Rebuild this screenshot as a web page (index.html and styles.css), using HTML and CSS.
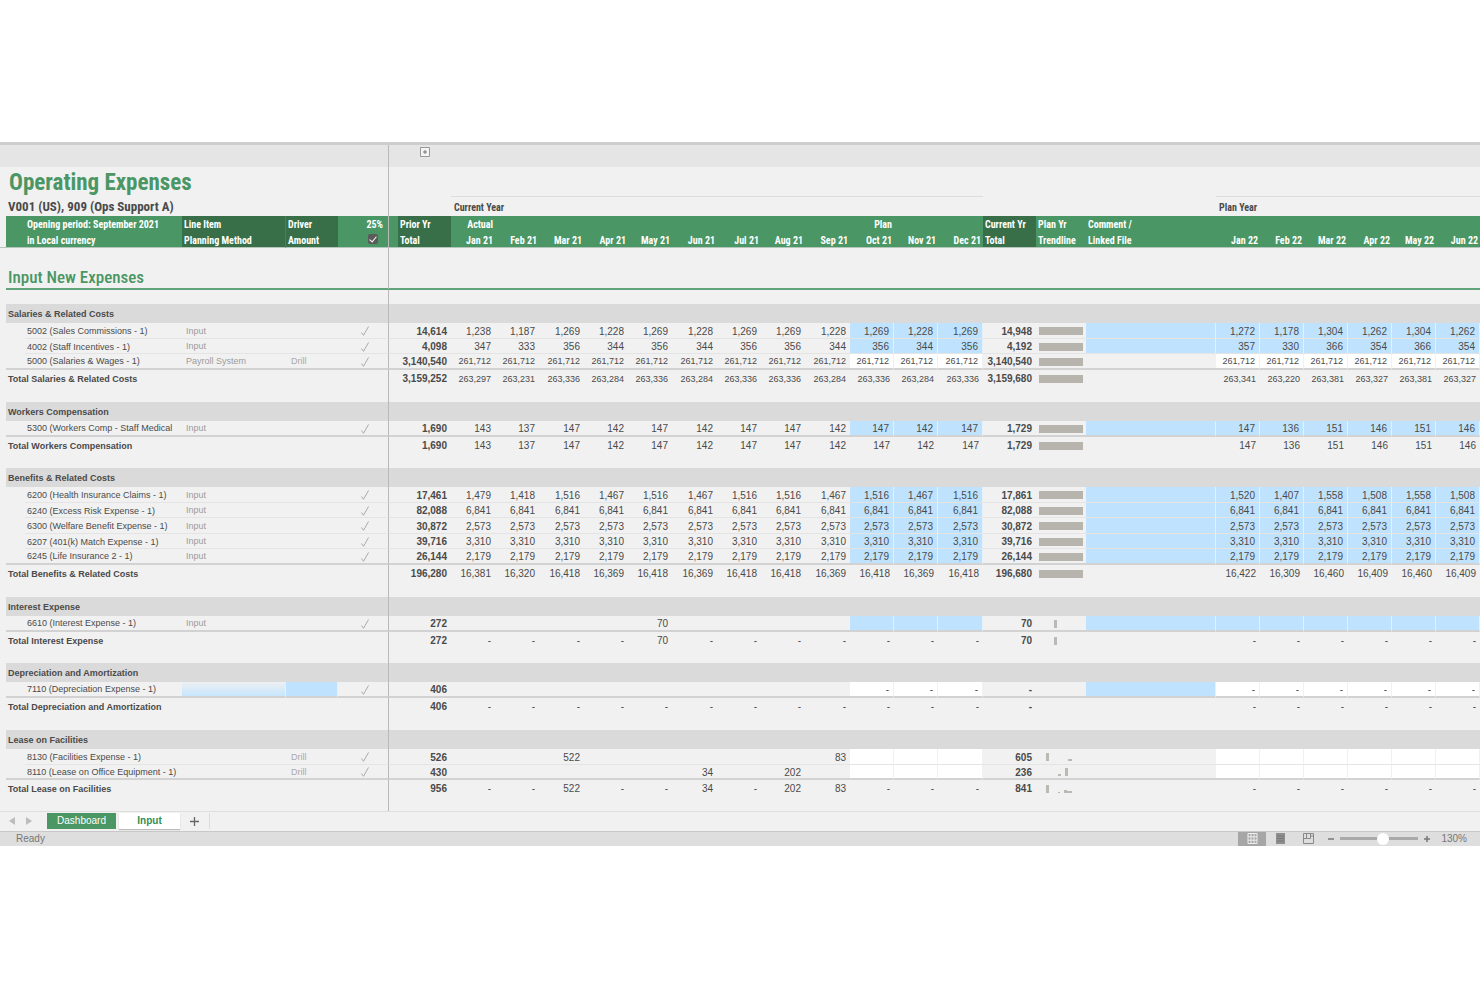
FILE: index.html
```html
<!DOCTYPE html>
<html lang="en">
<head>
<meta charset="utf-8">
<title>Operating Expenses</title>
<link rel="stylesheet" href="styles.css">
</head>
<body>
<main class="workbook">
  <table class="sheet">
    <colgroup>
      <col class="c-edge"><col class="c-label"><col class="c-method"><col class="c-driver"><col class="c-check"><col class="c-gap"><col class="c-total">
      <col class="c-month"><col class="c-month"><col class="c-quarter"><col class="c-month"><col class="c-month"><col class="c-quarter"><col class="c-month"><col class="c-month"><col class="c-quarter"><col class="c-month"><col class="c-month"><col class="c-quarter">
      <col class="c-total"><col class="c-trend"><col class="c-comment">
      <col class="c-month"><col class="c-month"><col class="c-month"><col class="c-month"><col class="c-month"><col class="c-month">
    </colgroup>
    <thead>
      <tr class="outline">
        <td colspan="4"></td><td class="freeze"></td><td></td>
        <td class="center"><button class="expand" type="button" aria-label="Expand columns"><svg viewBox="0 0 10 10"><path d="M.5.5h9v9h-9z" fill="#f4f4f4" stroke="#999"/><path d="M3 5h4M5 3v4" stroke="#777"/></svg></button></td>
        <td colspan="21"></td>
      </tr>
      <tr class="title-row">
        <td></td><td colspan="3"><h1>Operating Expenses</h1></td><td class="freeze"></td><td colspan="23"></td>
      </tr>
      <tr class="subtitle-row">
        <td></td><td colspan="3" class="entity">V001 (US), 909 (Ops Support A)</td><td class="freeze"></td><td colspan="2"></td>
        <th class="year" colspan="12">Current Year</th><td colspan="3"></td><th class="year" colspan="6">Plan Year</th>
      </tr>
      <tr class="head">
        <td class="edge"></td><th class="indent">Opening period: September 2021</th><th class="dark split">Line Item</th><th class="dark">Driver</th><th class="num freeze pct">25%</th><td></td><th class="dark">Prior Yr</th>
        <th class="num">Actual</th><td colspan="8"></td><th class="num">Plan</th><td colspan="2"></td>
        <th class="dark">Current Yr</th><th>Plan Yr</th><th>Comment /</th><td colspan="6"></td>
      </tr>
      <tr class="head last">
        <td class="edge"></td><th class="indent">in Local currency</th><th class="dark split">Planning Method</th><th class="dark">Amount</th><th class="num freeze pct"><input class="tick-box" type="checkbox" checked aria-label="Apply 25%"></th><td></td><th class="dark">Total</th>
        <th class="num">Jan 21</th><th class="num">Feb 21</th><th class="num">Mar 21</th><th class="num">Apr 21</th><th class="num">May 21</th><th class="num">Jun 21</th><th class="num">Jul 21</th><th class="num">Aug 21</th><th class="num">Sep 21</th><th class="num">Oct 21</th><th class="num">Nov 21</th><th class="num">Dec 21</th>
        <th class="dark">Total</th><th>Trendline</th><th>Linked File</th>
        <th class="num">Jan 22</th><th class="num">Feb 22</th><th class="num">Mar 22</th><th class="num">Apr 22</th><th class="num">May 22</th><th class="num">Jun 22</th>
      </tr>
      <tr class="section-title">
        <td class="edge"></td><td class="line" colspan="3"><h2>Input New Expenses</h2></td><td class="line freeze"></td><td class="line" colspan="23"></td>
      </tr>
      <tr class="section-gap"><td colspan="4"></td><td class="freeze"></td><td colspan="23"></td></tr>
    </thead>
  </table>
  <nav class="tabs" aria-label="Sheets">
    <button class="step" type="button" aria-label="Previous sheet"><svg viewBox="0 0 6 8"><path d="M6 0v8L0 4z" fill="#bdbdbd"/></svg></button>
    <button class="step" type="button" aria-label="Next sheet"><svg viewBox="0 0 6 8"><path d="M0 0v8l6-4z" fill="#bdbdbd"/></svg></button>
    <a class="tab green" href="#dashboard">Dashboard</a>
    <a class="tab current" href="#input" aria-current="page">Input</a>
    <button class="add" type="button" aria-label="Add sheet"><svg viewBox="0 0 9 9"><path d="M0 4.500h9M4.500 0v9" stroke="#666" stroke-width="1.300"/></svg></button>
  </nav>
  <footer class="status">
    <span class="ready">Ready</span>
    <button class="view on" type="button" aria-label="Normal view"><svg viewBox="0 0 11 11"><path d="M1 .5h9v10H1zM1 3.800h9M1 7.200h9M4 .5v10M7 .5v10" fill="none" stroke="#eee"/></svg></button>
    <button class="view" type="button" aria-label="Page layout"><svg viewBox="0 0 11 11"><path d="M1 0h9v11H1z" fill="#8f8f8f"/><path d="M2 3h7M2 5.500h7M2 8h7" stroke="#777"/></svg></button>
    <button class="view" type="button" aria-label="Page break preview"><svg viewBox="0 0 11 11"><path d="M.5.5h10v10H.5zM3.500.5v5H.5M7.500.5v5h-4M7.500 3h3" fill="none" stroke="#888"/></svg></button>
    <button class="zoom-step" type="button" aria-label="Zoom out"><svg viewBox="0 0 6 6"><path d="M0 3h6" stroke="#777" stroke-width="1.500"/></svg></button>
    <input class="zoom" type="range" min="0" max="100" value="55" aria-label="Zoom">
    <button class="zoom-step" type="button" aria-label="Zoom in"><svg viewBox="0 0 6 6"><path d="M0 3h6M3 0v6" stroke="#777" stroke-width="1.500"/></svg></button>
    <span class="percent">130%</span>
  </footer>
</main>
<script src="sheet.js"></script>
</body>
</html>
```

FILE: styles.css
```css
* { box-sizing: border-box; }

body {
  margin: 0;
  min-height: 100vh;
  display: flex;
  flex-direction: column;
  justify-content: center;
  background: #fff;
  color: #4a4a4a;
  font: 10px/14px "Liberation Sans", Arial, sans-serif;
}

button {
  display: inline-flex;
  align-items: center;
  justify-content: center;
  padding: 0;
  border: 0;
  background: none;
}

.workbook {
  overflow: hidden;
  background: #f1f1f1;
  border-top: 3px solid #cdcdcd;
}

/* Grid */
.sheet {
  width: 100%;
  table-layout: fixed;
  border-collapse: separate;
  border-spacing: 0;
}
.c-edge { width: 6px; }
.c-label { width: 176px; }
.c-method { width: 104px; }
.c-driver { width: 52px; }
.c-check { width: 51px; }
.c-gap { width: 9px; }
.c-total { width: 53px; }
.c-month { width: 44px; }
.c-quarter { width: 45px; }
.c-trend { width: 50px; }
.c-comment { width: 130px; }

.sheet td,
.sheet th {
  padding: 0;
  white-space: nowrap;
  text-align: left;
  font-weight: normal;
}
.sheet .freeze { border-right: 1px solid #b9b9b9; }
.sheet .center { text-align: center; }

.outline td { height: 22px; background: #e5e5e5; }
.expand { width: 10px; height: 10px; vertical-align: top; margin-top: -2px; }
.expand svg { width: 10px; height: 10px; }

.title-row td { height: 29px; }
.title-row h1,
.section-title h2,
.entity,
.head,
.year {
  font-family: "Liberation Sans Narrow", "Arial Narrow", "Roboto Condensed", Roboto, sans-serif;
}
.title-row h1 {
  margin: 0;
  padding: 3px 0 0 3px;
  font-size: 23px;
  line-height: 26px;
  font-weight: bold;
  color: #4a9664;
}
.subtitle-row td,
.subtitle-row th { height: 20px; }
.sheet .entity { padding: 2px 0 0 2px; font-size: 13px; line-height: 18px; font-weight: bold; }
.sheet .year { padding: 3px 0 0 3px; border-top: 1px solid #dcdcdc; font-weight: bold; }

.head td,
.head th { height: 16px; background: #4a9664; color: #fff; }
.head.last td,
.head.last th { border-bottom: 1px solid #b5c6ba; }
.sheet .head th { padding: 2px 0 0 2px; font-weight: bold; line-height: 12px; }
.sheet .head.last th { padding-top: 3px; }
.sheet .head .edge { background: none; }
.sheet .head .indent { padding-left: 21px; }
.sheet .head .dark { background: #386f48; }
.sheet .head .split { border-right: 1px solid #4a8058; }
.sheet .head .num { padding-left: 0; padding-right: 2px; text-align: right; }
.sheet .head .pct { padding-right: 5px; }
.sheet .head.last .pct { padding-top: 0; }

.tick-box {
  appearance: none;
  display: inline-block;
  width: 10px;
  height: 10px;
  margin: 0 5px 0 0;
  vertical-align: middle;
  border-radius: 2px;
  background: #5b5b5b;
}
.tick-box:checked::before {
  content: "";
  display: block;
  width: 3px;
  height: 6px;
  margin: 1px 0 0 3px;
  border: solid #fff;
  border-width: 0 1px 1px 0;
  transform: rotate(40deg);
}

.section-title td { height: 42px; vertical-align: bottom; }
.section-title .line { border-bottom: 2px solid #62a479; }
.section-title h2 {
  margin: 0;
  padding-left: 2px;
  font-size: 17px;
  line-height: 22px;
  font-weight: 500;
  color: #4a9664;
}
.section-gap td { height: 14px; }

/* Account groups */
.sheet .group th { font-size: 9px; }
.band td,
.band th { height: 19px; background: #dadada; }
.sheet .band th { padding: 2px 0 0 2px; font-weight: bold; }
.sheet .band .edge { background: none; }

.item { height: 15px; }
.item:nth-child(even) { height: 16px; }
.sheet .item td,
.sheet .item th { padding-top: 2px; border-bottom: 1px solid #e4e4e4; line-height: 11px; }
.sheet .item .edge { border-bottom: 0; }
.sheet .item th {
  padding-left: 21px;
  border-bottom: 0;
  background: linear-gradient(#e4e4e4, #e4e4e4) no-repeat 19px 100% / 100% 1px;
}
.sheet .item.end td,
.sheet .item.end th { border-bottom: 2px solid #d2d2d2; background-image: none; }
.sheet .item.end .edge { border-bottom: 0; }
.total { height: 15px; }
.sheet .total td,
.sheet .total th { padding-top: 3px; line-height: 12px; }
.sheet .total th { padding-left: 2px; font-weight: bold; }
.gap td { height: 17px; }
.group:nth-child(even) .gap td { height: 16px; }

.sheet .method { padding-left: 4px; color: #9c9c9c; font-size: 9px; }
.sheet .driver { padding-left: 5px; color: #aaa; font-size: 9px; }
.sheet .mark { padding-left: 23px; }
.mark svg { display: block; width: 8px; height: 10px; }
.sheet td.num { padding-right: 4px; text-align: right; }
.sheet td.fit { font-size: 9px; }
.sheet td.sum { font-weight: bold; }
.sheet td.trend { padding-left: 3px; }
.trend svg { display: block; width: 44px; height: 8px; }

.sheet .blue { background: #bfe3ff; border-right: 1px solid #e6f0f8; }
.sheet .white { background: #fff; border-right: 1px solid #f1f1f1; }
.sheet .item.end .fade { background: linear-gradient(#edf0f3, #c6e5fd); border-right: 1px solid #e6f0f8; }

/* Sheet tabs */
.tabs {
  display: flex;
  align-items: center;
  height: 20px;
  padding-left: 8px;
  border-top: 1px solid #dedede;
}
.step { width: 8px; height: 12px; margin-right: 9px; }
.step svg { width: 6px; height: 8px; }
.tab { display: block; text-align: center; text-decoration: none; line-height: 16px; }
.green { width: 69px; margin-left: 5px; background: #4a9664; color: #fff; }
.current {
  width: 61px;
  margin: 0 0 1px 3px;
  background: #fff;
  color: #2f9056;
  font-weight: bold;
  box-shadow: 0 1px 1px #bbb;
}
.add { width: 30px; height: 16px; border-right: 1px solid #dcdcdc; }
.add svg { width: 9px; height: 9px; }

/* Status bar */
.status {
  display: flex;
  align-items: center;
  height: 15px;
  padding: 0 13px 0 16px;
  border-top: 1px solid #c8c8c8;
  background: #dedede;
  color: #777;
}
.ready { flex: 1; }
.view { width: 28px; height: 14px; }
.on { background: #a6a6a6; }
.view svg { width: 11px; height: 11px; }
.zoom-step { width: 6px; height: 12px; }
.zoom-step svg { width: 6px; height: 6px; }
.view + .zoom-step { margin-left: 6px; }
.zoom {
  appearance: none;
  width: 78px;
  height: 12px;
  margin: 0 6px;
  background: linear-gradient(#aaa, #aaa) no-repeat center / 100% 3px;
}
.zoom::-webkit-slider-thumb {
  appearance: none;
  width: 12px;
  height: 12px;
  border-radius: 50%;
  background: #fff;
}
.percent { margin-left: 11px; }
```

FILE: sheet.js
```js
// Month lists are space separated; "." is an empty cell, "a*12" repeats a value.
const groups = [
  { name: "Salaries & Related Costs", rows: [
    { label: "5002 (Sales Commissions - 1)", method: "Input", prior: "14,614", year: "1,238 1,187 1,269 1,228 1,269 1,228 1,269 1,269 1,228 1,269 1,228 1,269", current: "14,948", plan: "1,272 1,178 1,304 1,262 1,304 1,262", trend: "full", fill: "blue", comment: true },
    { label: "4002 (Staff Incentives - 1)", method: "Input", prior: "4,098", year: "347 333 356 344 356 344 356 356 344 356 344 356", current: "4,192", plan: "357 330 366 354 366 354", trend: "full", fill: "blue", comment: true },
    { label: "5000 (Salaries & Wages - 1)", method: "Payroll System", driver: "Drill", prior: "3,140,540", year: "261,712*12", current: "3,140,540", plan: "261,712*6", trend: "full", fill: "white" },
    { total: true, prior: "3,159,252", year: "263,297 263,231 263,336 263,284 263,336 263,284 263,336 263,336 263,284 263,336 263,284 263,336", current: "3,159,680", plan: "263,341 263,220 263,381 263,327 263,381 263,327", trend: "full" }
  ] },
  { name: "Workers Compensation", rows: [
    { label: "5300 (Workers Comp - Staff Medical", method: "Input", prior: "1,690", year: "143 137 147 142 147 142 147 147 142 147 142 147", current: "1,729", plan: "147 136 151 146 151 146", trend: "full", fill: "blue", comment: true },
    { total: true, prior: "1,690", year: "143 137 147 142 147 142 147 147 142 147 142 147", current: "1,729", plan: "147 136 151 146 151 146", trend: "full" }
  ] },
  { name: "Benefits & Related Costs", rows: [
    { label: "6200 (Health Insurance Claims - 1)", method: "Input", prior: "17,461", year: "1,479 1,418 1,516 1,467 1,516 1,467 1,516 1,516 1,467 1,516 1,467 1,516", current: "17,861", plan: "1,520 1,407 1,558 1,508 1,558 1,508", trend: "full", fill: "blue", comment: true },
    { label: "6240 (Excess Risk Expense - 1)", method: "Input", prior: "82,088", year: "6,841*12", current: "82,088", plan: "6,841*6", trend: "full", fill: "blue", comment: true },
    { label: "6300 (Welfare Benefit Expense - 1)", method: "Input", prior: "30,872", year: "2,573*12", current: "30,872", plan: "2,573*6", trend: "full", fill: "blue", comment: true },
    { label: "6207 (401(k) Match Expense - 1)", method: "Input", prior: "39,716", year: "3,310*12", current: "39,716", plan: "3,310*6", trend: "full", fill: "blue", comment: true },
    { label: "6245 (Life Insurance 2 - 1)", method: "Input", prior: "26,144", year: "2,179*12", current: "26,144", plan: "2,179*6", trend: "full", fill: "blue", comment: true },
    { total: true, prior: "196,280", year: "16,381 16,320 16,418 16,369 16,418 16,369 16,418 16,418 16,369 16,418 16,369 16,418", current: "196,680", plan: "16,422 16,309 16,460 16,409 16,460 16,409", trend: "full" }
  ] },
  { name: "Interest Expense", rows: [
    { label: "6610 (Interest Expense - 1)", method: "Input", prior: "272", year: ". . . . 70 . . . . . . .", current: "70", plan: ".*6", trend: "may", fill: "blue", comment: true },
    { total: true, prior: "272", year: "- - - - 70 - - - - - - -", current: "70", plan: "-*6", trend: "may" }
  ] },
  { name: "Depreciation and Amortization", rows: [
    { label: "7110 (Depreciation Expense - 1)", entry: true, prior: "406", year: ". . . . . . . . . - - -", current: "-", plan: "-*6", fill: "white", comment: true },
    { total: true, prior: "406", year: "-*12", current: "-", plan: "-*6" }
  ] },
  { name: "Lease on Facilities", rows: [
    { label: "8130 (Facilities Expense - 1)", driver: "Drill", prior: "526", year: ". . 522 . . . . . 83 . . .", current: "605", plan: ".*6", trend: "marSep", fill: "white" },
    { label: "8110 (Lease on Office Equipment - 1)", driver: "Drill", prior: "430", year: ". . . . . 34 . 202 . . . .", current: "236", plan: ".*6", trend: "junAug", fill: "white" },
    { total: true, prior: "956", year: "- - 522 - - 34 - 202 83 - - -", current: "841", plan: "-*6", trend: "all" }
  ] }
];

// Sparkline bars as x, width, height.
const trends = {
  full: [[0, 44, 8]],
  may: [[15, 3, 8]],
  marSep: [[7, 3, 8], [29, 4, 2]],
  junAug: [[19, 3, 2], [26, 3, 8]],
  all: [[7, 3, 8], [19, 2, 1], [25, 3, 3], [28, 5, 2]]
};

const esc = s => s.replace(/&/g, "&amp;");
const values = s => s.includes("*") ? Array(Number(s.split("*")[1])).fill(s.split("*")[0]) : s.split(" ");
const number = (v, cls) => `<td class="num${v.length > 6 && !cls.includes("sum") ? " fit" : ""} ${cls}">${v === "." ? "" : v}</td>`;
const check = '<svg viewBox="0 0 8 10"><path d="M.5 6.500 2.500 9.300 7.500.5" fill="none" stroke="#aaa"/></svg>';

function trend(kind) {
  if (!kind) return "";
  const color = kind === "full" ? "#b6b4ad" : "#bbb9b3";
  return `<svg viewBox="0 0 44 8">${trends[kind].map(([x, w, h]) => `<rect x="${x}" y="${8 - h}" width="${w}" height="${h}" fill="${color}"/>`).join("")}</svg>`;
}

function row(r, i, rows, name) {
  const fill = r.fill || "";
  const cls = r.total ? "total" : "item" + (rows[i + 1].total ? " end" : "");
  const label = r.total ? "Total " + name : r.label;
  return `<tr class="${cls}"><td class="edge"></td><th>${esc(label)}</th>` +
    `<td class="method${r.entry ? " fade" : ""}">${r.method || ""}</td>` +
    `<td class="driver${r.entry ? " blue" : ""}">${r.driver || ""}</td>` +
    `<td class="mark freeze">${r.total ? "" : check}</td><td></td>` +
    number(r.prior, "sum") +
    values(r.year).map((v, m) => number(v, m > 8 ? fill : "")).join("") +
    number(r.current, "sum") +
    `<td class="trend">${trend(r.trend)}</td><td class="${r.comment ? "blue" : ""}"></td>` +
    values(r.plan).map(v => number(v, fill)).join("") + "</tr>";
}

const spacer = '<tr class="gap"><td colspan="4"></td><td class="freeze"></td><td colspan="23"></td></tr>';
const sheet = document.querySelector(".sheet");
groups.forEach(g => {
  const body = document.createElement("tbody");
  body.className = "group";
  body.innerHTML = `<tr class="band"><td class="edge"></td><th colspan="3">${esc(g.name)}</th><td class="freeze"></td><td colspan="23"></td></tr>` +
    g.rows.map((r, i) => row(r, i, g.rows, g.name)).join("") + spacer;
  sheet.append(body);
});
```
